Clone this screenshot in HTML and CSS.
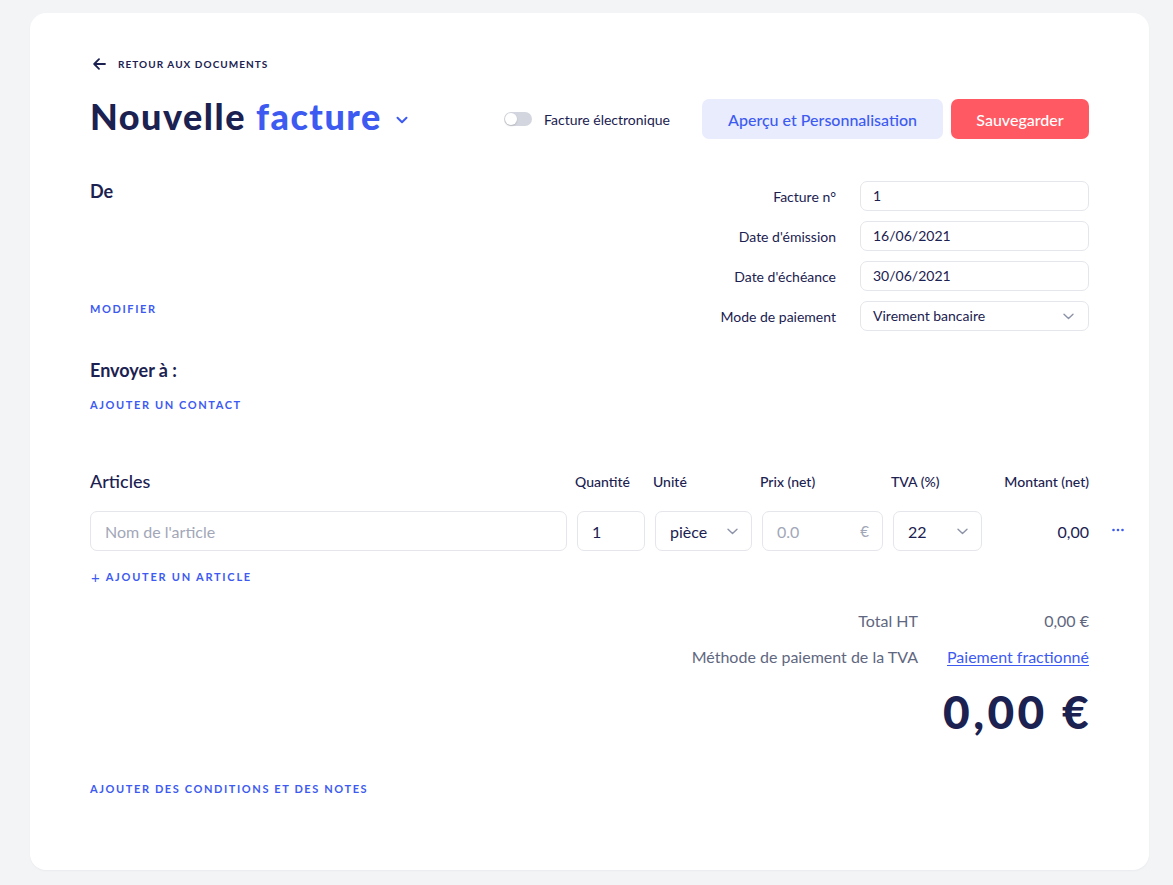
FILE: index.html
```html
<!DOCTYPE html>
<html lang="fr">
<head>
<meta charset="utf-8">
<title>Nouvelle facture</title>
<link rel="stylesheet" href="styles.css">
</head>
<body>
<main class="card">
  <a class="back" href="#">
    <svg class="back-icon" width="13" height="12" viewBox="0 0 13 12" fill="none"><path d="M12 6H1.5M6 1.2L1.2 6L6 10.8" stroke="#1b2150" stroke-width="1.8" stroke-linecap="round" stroke-linejoin="round"/></svg>
    <span>RETOUR AUX DOCUMENTS</span>
  </a>

  <header class="head">
    <h1 class="title">Nouvelle <span class="accent">facture</span>
      <svg class="title-chev" width="12" height="8" viewBox="0 0 12 8" fill="none"><path d="M1.5 1.8L6 6.2L10.5 1.8" stroke="#3d5af1" stroke-width="2" stroke-linecap="round" stroke-linejoin="round"/></svg>
    </h1>
    <div class="actions">
      <label class="toggle-wrap"><span class="toggle"><span class="knob"></span></span><span class="toggle-label">Facture électronique</span></label>
      <button class="btn btn-light">Aperçu et Personnalisation</button>
      <button class="btn btn-red">Sauvegarder</button>
    </div>
  </header>

  <section class="top">
    <div class="parties">
      <h2 class="sub">De</h2>
      <a class="link modifier" href="#">MODIFIER</a>
      <h2 class="sub envoyer">Envoyer à :</h2>
      <a class="link contact" href="#">AJOUTER UN CONTACT</a>
    </div>
    <div class="meta">
      <label class="meta-label">Facture n°</label>
      <div class="field">1</div>
      <label class="meta-label">Date d'émission</label>
      <div class="field">16/06/2021</div>
      <label class="meta-label">Date d'échéance</label>
      <div class="field">30/06/2021</div>
      <label class="meta-label">Mode de paiement</label>
      <div class="field select">Virement bancaire
        <svg class="chev" width="11" height="7" viewBox="0 0 11 7" fill="none"><path d="M1 1.2L5.5 5.5L10 1.2" stroke="#8c93a8" stroke-width="1.4" stroke-linecap="round" stroke-linejoin="round"/></svg>
      </div>
    </div>
  </section>

  <section class="articles">
    <div class="grid grid-head">
      <div class="col-title">Articles</div>
      <div class="col-h">Quantité</div>
      <div class="col-h">Unité</div>
      <div class="col-h">Prix (net)</div>
      <div class="col-h">TVA (%)</div>
      <div class="col-h right">Montant (net)</div>
    </div>
    <div class="grid grid-row">
      <div class="box placeholder">Nom de l'article</div>
      <div class="box">1</div>
      <div class="box select">pièce
        <svg class="chev" width="11" height="7" viewBox="0 0 11 7" fill="none"><path d="M1 1.2L5.5 5.5L10 1.2" stroke="#8c93a8" stroke-width="1.4" stroke-linecap="round" stroke-linejoin="round"/></svg>
      </div>
      <div class="box placeholder price">0.0<span class="euro">€</span></div>
      <div class="box select">22
        <svg class="chev" width="11" height="7" viewBox="0 0 11 7" fill="none"><path d="M1 1.2L5.5 5.5L10 1.2" stroke="#8c93a8" stroke-width="1.4" stroke-linecap="round" stroke-linejoin="round"/></svg>
      </div>
      <div class="amount">0,00</div>
      <svg class="dots" width="12" height="4" viewBox="0 0 12 4"><circle cx="1.5" cy="2" r="1.3" fill="#3d5af1"/><circle cx="6" cy="2" r="1.3" fill="#3d5af1"/><circle cx="10.5" cy="2" r="1.3" fill="#3d5af1"/></svg>
    </div>
    <a class="link add-article" href="#"><span class="plus">+</span>AJOUTER UN ARTICLE</a>
  </section>

  <section class="totals">
    <div class="tot-row"><span class="tot-label">Total HT</span><span class="tot-val">0,00 €</span></div>
    <div class="tot-row"><span class="tot-label">Méthode de paiement de la TVA</span><a class="tot-link" href="#">Paiement fractionné</a></div>
    <div class="grand">0,00 €</div>
  </section>

  <a class="link notes" href="#">AJOUTER DES CONDITIONS ET DES NOTES</a>
</main>
</body>
</html>
```

FILE: styles.css
```css
* { box-sizing: border-box; }
html, body { margin: 0; padding: 0; }
body {
  background: #f3f4f6;
  font-family: Lato, "Open Sans", sans-serif;
  color: #1b2150;
  padding: 13px 24px 15px 30px;
}
a { text-decoration: none; }

.card {
  background: #ffffff;
  border-radius: 16px;
  padding: 44px 60px 74px 60px;
  width: 1119px;
  box-shadow: 0 1px 2px rgba(20, 30, 60, 0.04);
}

.back {
  display: flex;
  align-items: center;
  gap: 12px;
  height: 14px;
  color: #1b2150;
  font-size: 10px;
  font-weight: 700;
  letter-spacing: 1.05px;
  padding-left: 3px;
}
.back-icon { display: block; }

.head {
  margin-top: 28px;
  display: flex;
  justify-content: space-between;
  align-items: center;
  height: 40px;
}
.title {
  margin: 0 0 6px 0;
  font-size: 36px;
  font-weight: 900;
  letter-spacing: 1.5px;
  color: #1b2150;
  display: flex;
  align-items: center;
  line-height: 40px;
}
.title .accent { color: #3d5af1; margin-left: 10px; }
.title-chev { margin-left: 14px; margin-top: 8px; }

.actions { display: flex; align-items: center; }
.toggle-wrap { display: flex; align-items: center; gap: 12px; margin-right: 32px; }
.toggle {
  width: 28px; height: 14px; border-radius: 7px;
  background: #d3d6de; position: relative; display: block;
}
.knob {
  position: absolute; left: 1px; top: 1px;
  width: 12px; height: 12px; border-radius: 50%;
  background: #ffffff;
  box-shadow: 0 1px 2px rgba(0,0,0,0.15);
}
.toggle-label { font-size: 14px; color: #1b2150; }

.btn {
  height: 40px;
  border: 0;
  border-radius: 7px;
  font-family: Lato, sans-serif;
  font-size: 16px;
  font-weight: 500;
  cursor: pointer;
}
.btn-light { width: 241px; background: #e8ecfd; color: #3d5af1; }
.btn-red { width: 138px; background: #ff5a64; color: #ffffff; margin-left: 8px; }

.top {
  margin-top: 42px;
  display: flex;
  justify-content: space-between;
}
.parties { display: flex; flex-direction: column; align-items: flex-start; }
.sub { margin: 0; font-size: 18px; font-weight: 700; line-height: 20px; color: #1b2150; }
.link {
  display: block;
  color: #3d5af1;
  font-size: 11px;
  font-weight: 700;
  letter-spacing: 1.6px;
  line-height: 14px;
}
.modifier { margin-top: 101px; }
.envoyer { margin-top: 44px; }
.contact { margin-top: 18px; }

.meta {
  display: grid;
  grid-template-columns: auto 229px;
  column-gap: 24px;
  row-gap: 10px;
  align-items: center;
  height: 150px;
}
.meta-label { font-size: 14px; text-align: right; color: #1b2150; }
.field {
  height: 30px;
  border: 1px solid #e4e6eb;
  border-radius: 7px;
  padding: 0 12px 1px 12px;
  font-size: 14px;
  display: flex;
  align-items: center;
  color: #1b2150;
  position: relative;
}
.select { justify-content: space-between; }
.field .chev { margin-right: 2px; margin-top: 2px; }

.articles { margin-top: 59px; }
.grid {
  display: grid;
  grid-template-columns: 477px 68px 97px 121px 89px 1fr;
  column-gap: 10px;
}
.grid-head { align-items: end; height: 20px; }
.col-title { font-size: 18px; font-weight: 500; line-height: 20px; }
.col-h { font-size: 14px; font-weight: 500; line-height: 18px; margin-left: -2px; }
.col-h.right { margin-left: 0; }
.right { text-align: right; }

.grid-row { margin-top: 20px; height: 40px; position: relative; align-items: center; }
.box {
  height: 40px;
  border: 1px solid #e4e6eb;
  border-radius: 7px;
  padding: 0 13px 0 14px;
  display: flex;
  align-items: center;
  font-size: 16px;
  color: #1b2150;
}
.box.select { justify-content: space-between; }
.placeholder { color: #a2a7b8; }
.price { justify-content: space-between; }
.euro { font-size: 15px; color: #a2a7b8; }
.amount { text-align: right; font-size: 16px; }
.dots {
  position: absolute;
  left: 1022px;
  top: 17px;
}

.add-article { margin-top: 19px; padding-left: 1px; display: flex; align-items: center; letter-spacing: 1.75px; }
.plus { font-size: 15px; font-weight: 400; margin-right: 6px; letter-spacing: 0; }

.totals { margin-top: 26px; display: flex; flex-direction: column; align-items: flex-end; }
.tot-row { display: flex; align-items: center; height: 20px; font-size: 16px; color: #5f6780; }
.tot-row + .tot-row { margin-top: 16px; }
.tot-label { text-align: right; }
.tot-val { width: 171px; text-align: right; }
.tot-link { width: 171px; text-align: right; color: #3d5af1; text-decoration: underline; text-underline-offset: 2px; }
.grand {
  margin-top: 22px;
  margin-right: -3px;
  line-height: 48px;
  font-size: 46px;
  font-weight: 900;
  color: #1b2150;
  letter-spacing: 3.4px;
}

.notes { margin-top: 46px; }
```
